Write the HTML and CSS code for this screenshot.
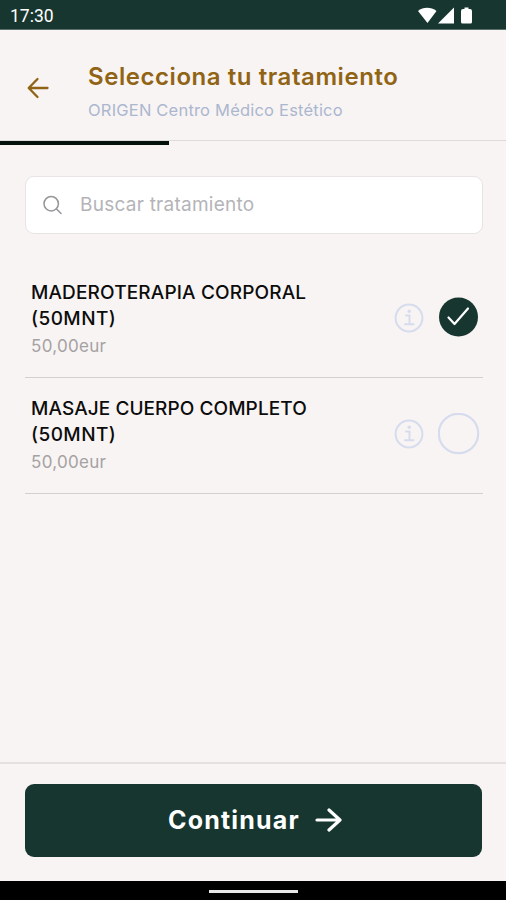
FILE: index.html
```html
<!DOCTYPE html>
<html lang="es">
<head>
    <meta charset="UTF-8">
    <meta name="viewport" content="width=device-width, initial-scale=1.0">
    <title>Selecciona tu tratamiento</title>
    <link rel="stylesheet" href="styles.css">
</head>
<body>
    <!-- Status bar -->
    <div class="status-bar">
        <span class="status-time">17:30</span>
        <svg class="status-icons" width="58" height="20" viewBox="0 0 58 20">
            <path d="M1 5C6 .7 14 .7 19.500 5L10.500 17Z"/>
            <path d="M21 17.500L37 1.500V17.500Z"/>
            <path d="M47.500 1.500h4v1.500h1.500q2 0 2 2v11q0 1.500-1.500 1.500h-8q-1.500 0-1.500-1.500v-11q0-2 2-2h1.500z"/>
        </svg>
    </div>

    <!-- Header -->
    <header class="header">
        <svg class="back-icon" width="22" height="22" viewBox="0 0 22 22">
            <path d="M20.500 11H2M10.500 2L1.700 11l8.800 9"/>
        </svg>
        <div class="header-text">
            <h1>Selecciona tu tratamiento</h1>
            <p>ORIGEN Centro Médico Estético</p>
        </div>
        <div class="progress"></div>
    </header>

    <!-- Treatments -->
    <main class="content">
        <label class="search">
            <svg class="search-icon" width="20" height="20" viewBox="0 0 20 20">
                <circle cx="8.200" cy="8.700" r="7.200"/>
                <path d="M13.500 14l4.500 4.500"/>
            </svg>
            <input type="text" placeholder="Buscar tratamiento">
        </label>

        <div class="item">
            <div class="item-text">
                <h2><span class="name-first">MADEROTERAPIA CORPORAL</span><br>(50MNT)</h2>
                <p>50,00eur</p>
            </div>
            <svg class="info-icon" width="30" height="30" viewBox="0 0 30 30">
                <circle cx="15" cy="15" r="13.400"/>
                <path d="M12 12.500h3.500v8.500M11 21.300h8.500"/>
                <circle class="info-dot" cx="15.200" cy="8.300" r="1.700"/>
            </svg>
            <svg class="check" width="42" height="42" viewBox="0 0 42 42">
                <circle class="check-fill" cx="20.500" cy="20" r="19.500"/>
                <path d="M10.500 20.500l6 6.500L30 11.500"/>
            </svg>
        </div>

        <div class="item">
            <div class="item-text">
                <h2><span class="name-second">MASAJE CUERPO COMPLETO</span><br>(50MNT)</h2>
                <p>50,00eur</p>
            </div>
            <svg class="info-icon" width="30" height="30" viewBox="0 0 30 30">
                <circle cx="15" cy="15" r="13.400"/>
                <path d="M12 12.500h3.500v8.500M11 21.300h8.500"/>
                <circle class="info-dot" cx="15.200" cy="8.300" r="1.700"/>
            </svg>
            <svg class="check" width="42" height="42" viewBox="0 0 42 42">
                <circle class="check-empty" cx="20.500" cy="20.500" r="19.700"/>
            </svg>
        </div>
    </main>

    <!-- Footer -->
    <footer class="footer">
        <button class="btn">
            <span>Continuar</span>
            <svg class="next-icon" width="27" height="26" viewBox="0 0 27 26">
                <path d="M2 13h22M14 3l11 10-11 10"/>
            </svg>
        </button>
    </footer>

    <div class="nav-bar"><div class="nav-handle"></div></div>
</body>
</html>
```
FILE: styles.css
```css
* {
    box-sizing: border-box;
}

body {
    margin: 0;
    height: 900px;
    display: flex;
    flex-direction: column;
    background-color: #f8f4f3;
    font-family: Inter, "Liberation Sans", sans-serif;
    overflow: hidden;
}

h1, h2, p {
    margin: 0;
    white-space: nowrap;
}

svg {
    flex: none;
    fill: none;
    stroke-linecap: round;
    stroke-linejoin: round;
}

.status-bar {
    height: 30px;
    padding: 2px 31px 0 10px;
    display: flex;
    justify-content: space-between;
    background-color: #173630;
    border-bottom: 1px solid #5d716c;
}

.status-time {
    font-family: Roboto, sans-serif;
    font-size: 17.5px;
    line-height: 28px;
    color: #fff;
}

.status-icons {
    margin-top: 4px;
    fill: #fff;
}

.header {
    position: relative;
    height: 111px;
    padding: 31px 0 0 27px;
    display: flex;
    align-items: flex-start;
    border-bottom: 1px solid #dfdbdb;
}

.back-icon {
    margin: 16px 39px 0 0;
    stroke: #906414;
    stroke-width: 2.3;
}

h1 {
    font-size: 24px;
    line-height: 32px;
    font-weight: 600;
    letter-spacing: 0.56px;
    color: #906414;
}

.header-text p {
    font-size: 16.5px;
    line-height: 22px;
    letter-spacing: 0.2px;
    margin-top: 6px;
    color: #abb7cf;
}

.progress {
    position: absolute;
    left: 0;
    bottom: -5px;
    width: 169px;
    height: 4px;
    background-color: #04120e;
}

.content {
    flex: 1;
    padding: 35px 23px 0 25px;
}

.search {
    height: 58px;
    margin-bottom: 27px;
    padding: 0 16px 0 17px;
    display: flex;
    align-items: center;
    background-color: #fff;
    border: 1.5px solid #e8e4e4;
    border-radius: 9px;
}

.search-icon {
    stroke: #96969a;
    stroke-width: 1.5;
}

.search input {
    flex: 1;
    min-width: 0;
    margin: 0 0 1px 17px;
    padding: 0;
    border: none;
    outline: none;
    font-family: inherit;
    font-size: 19px;
    letter-spacing: 0.25px;
}

.search input::placeholder {
    color: #b4b4b8;
}

.item {
    height: 117px;
    padding: 19px 3px 0 6px;
    display: flex;
    align-items: flex-start;
    border-bottom: 1px solid #d4d0d0;
}

.item + .item {
    height: 116px;
    padding-top: 18px;
}

.item-text {
    flex: 1;
}

h2 {
    font-size: 19px;
    line-height: 26px;
    font-weight: 500;
    letter-spacing: 0.45px;
    color: #0c0c0c;
}

.name-first {
    letter-spacing: 0.15px;
}

.name-second {
    letter-spacing: 0.08px;
}

.item-text p {
    font-size: 17px;
    line-height: 24px;
    letter-spacing: 0.3px;
    margin-top: 2px;
    color: #a4a2a3;
}

.info-icon {
    margin: 23px 14px 0 0;
    stroke: #d6dced;
    stroke-width: 2;
}

.info-dot {
    fill: #d6dced;
    stroke: none;
}

.check {
    margin-top: 17px;
    stroke: #fff;
    stroke-width: 2.2;
}

.check-fill {
    fill: #173630;
    stroke: none;
}

.check-empty {
    stroke: #d6dced;
    stroke-width: 2.2;
}

.footer {
    height: 119px;
    padding: 20px 24px 0 25px;
    border-top: 2px solid #e5e1e1;
}

.btn {
    width: 100%;
    height: 73px;
    padding: 0 0 2px;
    display: flex;
    align-items: center;
    justify-content: center;
    gap: 15px;
    background-color: #173630;
    border: none;
    border-radius: 9px;
    color: #fff;
    font-family: inherit;
    font-size: 25px;
    font-weight: 700;
    letter-spacing: 1.2px;
}

.next-icon {
    margin-right: -3px;
    stroke: #fff;
    stroke-width: 3.2;
}

.nav-bar {
    height: 19px;
    padding-top: 9px;
    background-color: #000;
}

.nav-handle {
    width: 89px;
    height: 3px;
    margin: 0 auto;
    background-color: #e8e8e8;
}
```
